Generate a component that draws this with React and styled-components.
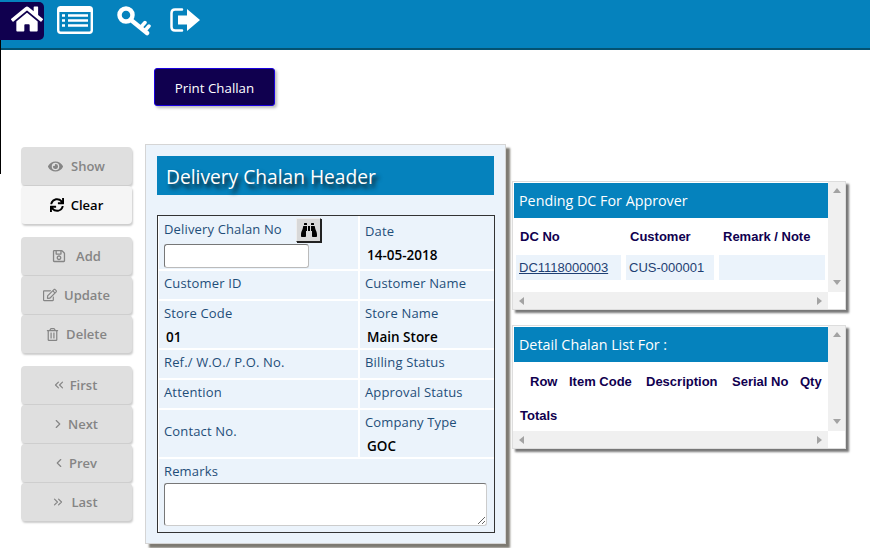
import React from "react";
import styled, { createGlobalStyle } from "styled-components";
import { FaHome, FaEye, FaSync, FaRegSave, FaRegEdit, FaRegTrashAlt, FaBinoculars } from "react-icons/fa";
import { ChevronsLeft, ChevronsRight, ChevronLeft, ChevronRight } from "lucide-react";

const GlobalStyle = createGlobalStyle`
  html, body {
    margin: 0;
    padding: 0;
    background: #fff;
    font-family: "Open Sans", sans-serif;
    overflow: hidden;
  }
`;

const Page = styled.div`
  width: 870px;
  height: 548px;
  position: relative;
  overflow: hidden;
`;

const TopBar = styled.header`
  height: 48px;
  background: #0582bd;
  border-bottom: 2px solid #045272;
  display: flex;
  align-items: flex-start;
`;

const HomeButton = styled.a`
  width: 44px;
  height: 38px;
  margin-top: 2px;
  padding: 0 0 4px 11px;
  box-sizing: border-box;
  background: #10004f;
  border-radius: 0 5px 5px 0;
  display: flex;
  align-items: center;
  color: #fff;
  font-size: 32px;
`;

const NavIcon = styled.a`
  display: flex;
  color: #fff;
  margin-top: ${(p) => p.$top}px;
  margin-left: ${(p) => p.$left}px;
`;

const Edge = styled.div`
  position: absolute;
  left: 0;
  top: 40px;
  width: 1px;
  height: 134px;
  background: #000;
`;

const PrintRow = styled.div`
  height: 93px;
  padding: 18px 0 0 154px;
  box-sizing: border-box;
`;

const PrintButton = styled.button`
  width: 121px;
  height: 38px;
  background: #10004f;
  border: 1px solid #1a00e0;
  border-radius: 3px;
  box-shadow: 2px 2px 3px #bbb;
  color: #fff;
  font: 13.3px "Open Sans", sans-serif;
  padding: 1px 0 0;
`;

const Main = styled.div`
  display: flex;
  align-items: flex-start;
  padding-left: 21px;
`;

const Sidebar = styled.nav`
  width: 111px;
  margin-top: 4px;
  margin-right: 13px;
  display: flex;
  flex-direction: column;
`;

const Group = styled.div`
  display: flex;
  flex-direction: column;
  gap: 1px;
  margin-bottom: ${(p) => p.$after}px;
`;

const SideButton = styled.button`
  height: 38px;
  width: 111px;
  border: 0;
  padding: 0 ${(p) => p.$nudge || 0}px 0 0;
  border-radius: 4px;
  background: ${(p) => (p.$active ? "#f5f5f5" : "#dfdfdf")};
  color: ${(p) => (p.$active ? "#000" : "#858585")};
  box-shadow: 1px 2px 2px #ccc;
  font: 600 13px "Open Sans", sans-serif;
  display: flex;
  align-items: center;
  justify-content: center;
  gap: ${(p) => p.$gap ?? 7}px;
  svg {
    width: ${(p) => p.$icon || 14}px;
    height: ${(p) => p.$icon || 14}px;
  }
`;

const HeaderPanel = styled.section`
  width: 361px;
  height: 400px;
  margin-top: 1px;
  box-sizing: border-box;
  background: #ebf3fb;
  border: 1px solid #d5d5d5;
  box-shadow: 4px 4px 2px #7d7a72;
  padding: 11px 11px 0 11px;
`;

const PanelTitle = styled.h2`
  margin: 0 0 20px;
  height: 39px;
  background: #0582bd;
  color: #fff;
  font: 400 19.2px/41px "Open Sans", sans-serif;
  padding-left: 9px;
  text-shadow: 3px 4px 4px #111;
`;

const FormGrid = styled.div`
  width: 338px;
  box-sizing: border-box;
  border: 1px solid #333;
  display: grid;
  grid-template-columns: 199px 134px;
  gap: 2px;
  background: #fff;
  padding: 0 1px;
`;

const Cell = styled.div`
  background: #ebf3fb;
  height: ${(p) => p.$h}px;
  box-sizing: border-box;
  padding: ${(p) => p.$pad ?? 4}px 0 0 5px;
  grid-column: ${(p) => (p.$wide ? "1 / span 2" : "auto")};
  position: relative;
`;

const Label = styled.div`
  font-size: 13px;
  line-height: 17px;
  color: #1f4e79;
  letter-spacing: 0.15px;
`;

const Value = styled.div`
  font-size: 13.5px;
  line-height: 17px;
  font-weight: 600;
  color: #000;
  margin: 7px 0 0 2px;
`;

const Finder = styled.button`
  position: absolute;
  left: 137px;
  top: 2px;
  width: 25px;
  height: 24px;
  padding: 0;
  border: 1px solid;
  border-color: #eee #222 #222 #eee;
  box-shadow: 1px 1px 0 #222;
  background: #d8d8d8;
  color: #000;
  font-size: 16px;
  display: flex;
  align-items: center;
  justify-content: center;
`;

const TextInput = styled.input`
  display: block;
  width: 145px;
  height: 24px;
  box-sizing: border-box;
  margin-top: 6px;
  border: 1px solid #bbb;
  border-top-color: #777;
  border-left-color: #777;
  border-radius: 3px;
  background: #fff;
`;

const RemarkBox = styled.textarea`
  display: block;
  width: 323px;
  height: 43px;
  box-sizing: border-box;
  margin-top: 3px;
  border: 1px solid #ccc;
  border-top-color: #777;
  border-left-color: #777;
  border-radius: 3px;
  background: #fff;
`;

const RightColumn = styled.div`
  margin: 38px 0 0 6px;
  display: flex;
  flex-direction: column;
  gap: 15px;
`;

const ListBox = styled.section`
  width: 334px;
  height: ${(p) => p.$h}px;
  box-sizing: border-box;
  border: 1px solid #ddd;
  box-shadow: 3px 3px 2px #777;
  background: #fff;
  display: grid;
  grid-template-columns: 315px 17px;
  grid-template-rows: 1fr 17px;
`;

const ListBody = styled.div`
  padding: 1px 0 0 1px;
  overflow: hidden;
`;

const ListTitle = styled.h3`
  margin: 0;
  height: 35px;
  background: #0582bd;
  color: #fff;
  font: 400 14.3px/35px "Open Sans", sans-serif;
  padding-left: 5px;
`;

const ScrollY = styled.div`
  background: #f0f0f0;
  display: flex;
  flex-direction: column;
  justify-content: space-between;
  align-items: center;
  padding: 6px 0 7px;
`;

const ScrollX = styled.div`
  background: #f0f0f0;
  display: flex;
  justify-content: space-between;
  align-items: center;
  padding: 0 6px;
`;

const Arrow = styled.span`
  width: 0;
  height: 0;
  border: 4px solid transparent;
  ${(p) => p.$dir === "up" && "border-bottom: 5px solid #a3a3a3; border-top: 0;"}
  ${(p) => p.$dir === "down" && "border-top: 5px solid #a3a3a3; border-bottom: 0;"}
  ${(p) => p.$dir === "left" && "border-right: 5px solid #a3a3a3; border-left: 0;"}
  ${(p) => p.$dir === "right" && "border-left: 5px solid #a3a3a3; border-right: 0;"}
`;

const TableRow = styled.div`
  display: flex;
  font: 13px "Liberation Sans", Arial, sans-serif;
  color: #10004f;
`;

const Head = styled.div`
  flex: none;
  width: ${(p) => p.$w}px;
  height: ${(p) => p.$h || 37}px;
  line-height: ${(p) => (p.$h || 37) + 1}px;
  padding-left: ${(p) => p.$pad}px;
  box-sizing: border-box;
  font-weight: 700;
  white-space: nowrap;
`;

const DataCell = styled.div`
  width: ${(p) => p.$w}px;
  height: 25px;
  line-height: 26px;
  margin-left: ${(p) => p.$gap}px;
  padding-left: 3px;
  box-sizing: border-box;
  background: #ebf3fb;
  color: #1f3f73;
  a {
    color: #1f3f73;
    text-decoration: underline;
  }
`;

const sideGroups = [
  {
    after: 13,
    items: [
      { label: "Show", Icon: FaEye, icon: 15, gap: 8 },
      { label: "Clear", Icon: FaSync },
    ],
  },
  {
    after: 13,
    items: [
      { label: "Add", Icon: FaRegSave, gap: 10 },
      { label: "Update", Icon: FaRegEdit },
      { label: "Delete", Icon: FaRegTrashAlt, icon: 13 },
    ],
  },
  {
    after: 0,
    items: [
      { label: "First", Icon: ChevronsLeft, gap: 4, nudge: 4 },
      { label: "Next", Icon: ChevronRight, gap: 3, nudge: 4 },
      { label: "Prev", Icon: ChevronLeft, gap: 3, nudge: 4 },
      { label: "Last", Icon: ChevronsRight, gap: 6, nudge: 4 },
    ],
  },
];

function KeyIcon() {
  return (
    <svg width="34" height="30" viewBox="0 0 34 30" fill="none" stroke="#fff">
      <circle cx="9" cy="9" r="6.5" strokeWidth="4.5" />
      <path d="M14 14 L30 27" strokeWidth="4.5" strokeLinecap="round" />
      <path d="M24 21 L28 16.5 M28 24.5 L32 20" strokeWidth="3.5" strokeLinecap="round" />
    </svg>
  );
}

function LogoutIcon() {
  return (
    <svg width="31" height="24" viewBox="0 0 31 24">
      <path d="M12 1.5 H5 Q1.5 1.5 1.5 5 V19 Q1.5 22.5 5 22.5 H12" fill="none" stroke="#fff" strokeWidth="2.5" strokeLinecap="round" />
      <path d="M8 7.5 H17 V1 L30 12 L17 23 V16.5 H8 Z" fill="#fff" />
    </svg>
  );
}

function ListIcon() {
  return (
    <svg width="36" height="28" viewBox="0 0 36 28">
      <rect x="1.2" y="1.2" width="33.6" height="25.6" rx="2.5" fill="none" stroke="#fff" strokeWidth="2.4" />
      <rect x="1" y="1" width="34" height="5" fill="#fff" />
      <path d="M5 9.5 H8 M5 14.5 H8 M5 19.5 H8 M11 9.5 H31 M11 14.5 H31 M11 19.5 H31" stroke="#fff" strokeWidth="2.6" />
    </svg>
  );
}

function ScrollBars() {
  return (
    <>
      <ScrollY><Arrow $dir="up" /><Arrow $dir="down" /></ScrollY>
      <ScrollX><Arrow $dir="left" /><Arrow $dir="right" /></ScrollX>
    </>
  );
}

export default function App() {
  return (
    <Page>
      <GlobalStyle />
      <TopBar>
        <HomeButton><FaHome /></HomeButton>
        <NavIcon $top={6} $left={13}><ListIcon /></NavIcon>
        <NavIcon $top={6} $left={24}><KeyIcon /></NavIcon>
        <NavIcon $top={8} $left={19}><LogoutIcon /></NavIcon>
      </TopBar>
      <Edge />
      <PrintRow>
        <PrintButton>Print Challan</PrintButton>
      </PrintRow>
      <Main>
        <Sidebar>
          {sideGroups.map((group, i) => (
            <Group key={i} $after={group.after}>
              {group.items.map(({ label, Icon, icon, gap, nudge }) => (
                <SideButton key={label} $active={label === "Clear"} $icon={icon} $gap={gap} $nudge={nudge}>
                  <Icon />
                  {label}
                </SideButton>
              ))}
            </Group>
          ))}
        </Sidebar>
        <HeaderPanel>
          <PanelTitle>Delivery Chalan Header</PanelTitle>
          <FormGrid>
            <Cell $h={53} $pad={5}>
              <Label>Delivery Chalan No</Label>
              <Finder><FaBinoculars /></Finder>
              <TextInput />
            </Cell>
            <Cell $h={53} $pad={7}>
              <Label>Date</Label>
              <Value>14-05-2018</Value>
            </Cell>
            <Cell $h={28}><Label>Customer ID</Label></Cell>
            <Cell $h={28}><Label>Customer Name</Label></Cell>
            <Cell $h={47}>
              <Label>Store Code</Label>
              <Value>01</Value>
            </Cell>
            <Cell $h={47}>
              <Label>Store Name</Label>
              <Value>Main Store</Value>
            </Cell>
            <Cell $h={28}><Label>Ref./ W.O./ P.O. No.</Label></Cell>
            <Cell $h={28}><Label>Billing Status</Label></Cell>
            <Cell $h={28}><Label>Attention</Label></Cell>
            <Cell $h={28}><Label>Approval Status</Label></Cell>
            <Cell $h={47} $pad={13}><Label>Contact No.</Label></Cell>
            <Cell $h={47}>
              <Label>Company Type</Label>
              <Value>GOC</Value>
            </Cell>
            <Cell $h={73} $wide>
              <Label>Remarks</Label>
              <RemarkBox />
            </Cell>
          </FormGrid>
        </HeaderPanel>
        <RightColumn>
          <ListBox $h={129}>
            <ListBody>
              <ListTitle>Pending DC For Approver</ListTitle>
              <TableRow>
                <Head $w={110} $pad={6}>DC No</Head>
                <Head $w={93} $pad={6}>Customer</Head>
                <Head $w={110} $pad={6}>Remark / Note</Head>
              </TableRow>
              <TableRow>
                <DataCell $w={105} $gap={2}><a href="#dc">DC1118000003</a></DataCell>
                <DataCell $w={88} $gap={5}>CUS-000001</DataCell>
                <DataCell $w={106} $gap={5} />
              </TableRow>
            </ListBody>
            <ScrollBars />
          </ListBox>
          <ListBox $h={124}>
            <ListBody>
              <ListTitle>Detail Chalan List For :</ListTitle>
              <TableRow>
                <Head $w={55} $h={38} $pad={16}>Row</Head>
                <Head $w={63} $h={38} $pad={0}>Item Code</Head>
                <Head $w={85} $h={38} $pad={14}>Description</Head>
                <Head $w={83} $h={38} $pad={15}>Serial No</Head>
                <Head $w={27} $h={38} $pad={0}>Qty</Head>
              </TableRow>
              <TableRow>
                <Head $w={60} $h={30} $pad={6}>Totals</Head>
              </TableRow>
            </ListBody>
            <ScrollBars />
          </ListBox>
        </RightColumn>
      </Main>
    </Page>
  );
}
